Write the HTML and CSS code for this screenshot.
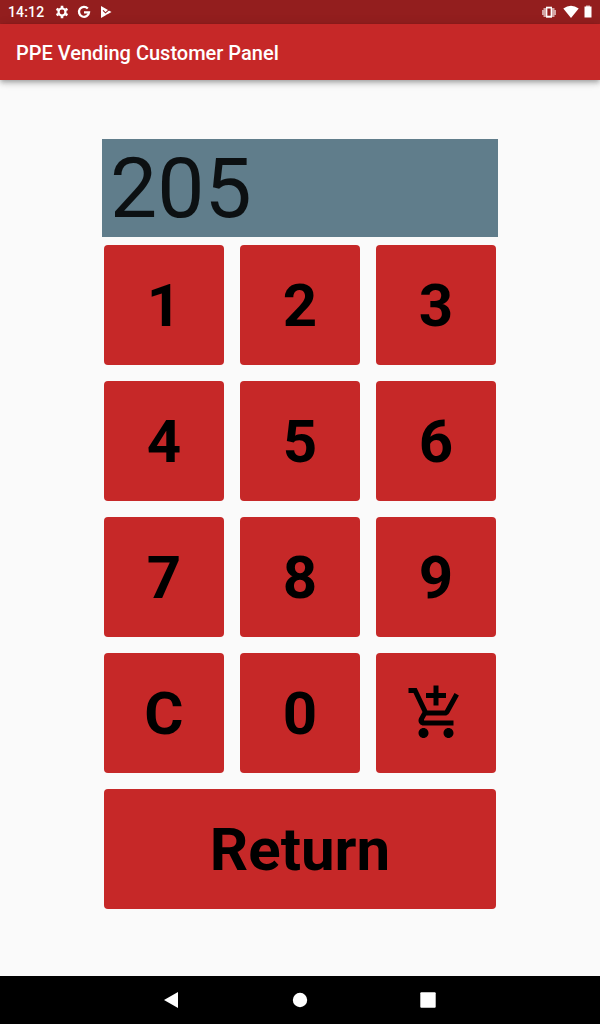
FILE: index.html
```html
<!DOCTYPE html>
<html lang="en">
<head>
<meta charset="utf-8">
<title>PPE Vending Customer Panel</title>
<link rel="stylesheet" href="styles.css">
</head>
<body>
<div class="screen">
  <div class="status">
    <span class="time">14:12</span>
    <svg class="gear" width="14" height="14" viewBox="0 0 14 14"><circle cx="7" cy="7" r="3.500" fill="none" stroke="#fff" stroke-width="2.200"/><path stroke="#fff" stroke-width="2.600" d="M7 .7v2.200M7 11.100v2.200M1.540 3.850l1.900 1.100M10.560 9.050l1.900 1.100M1.540 10.150l1.900-1.100M10.560 4.950l1.900-1.100"/></svg>
    <svg class="google" width="14" height="14" viewBox="0 0 14 14"><path fill="none" stroke="#fff" stroke-width="2.300" d="M10.800 3.500A5 5 0 1 0 12 7.300H7"/></svg>
    <svg class="play" width="14" height="14" viewBox="0 0 14 14"><path fill="#fff" d="M2 1l10.500 6L2 13z"/><path fill="none" stroke="#931e1e" stroke-width="1.100" d="M4 5.300l2.500 2.500L11 3.800"/><path fill="none" stroke="#931e1e" stroke-width=".7" opacity=".7" d="M5.500 13l3-4"/></svg>
    <span class="fill"></span>
    <svg class="vibrate" width="16" height="14" viewBox="0 0 16 14"><path fill="#fff" opacity=".6" d="M1 5h1.500V3H5V1.500h6V3h2.500v2H15v5h-1.500v2H11v1H5v-1H2.500v-2H1z"/><path fill="#931e1e" d="M6 3.500h4v7H6z"/><path fill="none" stroke="#fff" stroke-width="1.300" d="M5.700 2.700h4.600v9H5.700z"/></svg>
    <svg class="wifi" width="16" height="14" viewBox="0 0 16 14"><path fill="#fff" d="M.3 3.600Q8-2.200 15.700 3.600L8 13z"/></svg>
    <svg class="battery" width="8" height="13" viewBox="0 0 8 13"><path fill="#fff" opacity=".65" d="M2 .5h4V2H2z"/><path fill="#fff" d="M.5 1.500h7v11h-7z"/></svg>
  </div>
  <header class="appbar">PPE Vending Customer Panel</header>
  <main class="panel">
    <div class="display">205</div>
    <div class="keys">
      <button class="key">1</button><button class="key">2</button><button class="key">3</button>
      <button class="key">4</button><button class="key">5</button><button class="key">6</button>
      <button class="key">7</button><button class="key">8</button><button class="key">9</button>
      <button class="key">C</button><button class="key">0</button>
      <button class="key" aria-label="Add to cart"><svg class="cart" width="60" height="60" viewBox="0 0 24 24"><path d="M11 9h2V6h3V4h-3V1h-2v3H8v2h3v3zm-4 9c-1.100 0-1.990.9-1.990 2S5.900 22 7 22s2-.9 2-2-.9-2-2-2zm10 0c-1.100 0-1.990.9-1.990 2s.89 2 1.990 2 2-.9 2-2-.9-2-2-2zm-9.830-3.250.03-.12.9-1.630h7.450c.75 0 1.410-.41 1.750-1.030l3.860-7.010L19.420 4h-.01l-1.100 2-2.760 5H8.530l-.13-.27L6.160 6l-.95-2-.94-2H1v2h2l3.600 7.590-1.350 2.450c-.16.28-.25.610-.25.960 0 1.100.9 2 2 2h12v-2H7.420c-.13 0-.25-.11-.25-.25z"/></svg></button>
      <button class="key wide">Return</button>
    </div>
  </main>
  <nav class="nav">
    <svg width="16" height="18" viewBox="0 0 16 18"><path fill="#fff" d="M14 1v16L0 9z"/></svg>
    <svg width="16" height="16" viewBox="0 0 16 16"><circle cx="8" cy="8" r="7.200" fill="#fff"/></svg>
    <svg width="16" height="16" viewBox="0 0 16 16"><rect x=".3" y=".3" width="15.400" height="15.400" rx="1" fill="#fff"/></svg>
  </nav>
</div>
</body>
</html>
```
FILE: styles.css
```css
* { box-sizing: border-box; }
body { margin: 0; font-family: Roboto, sans-serif; }
.screen { width: 600px; height: 1024px; display: flex; flex-direction: column; background: #fafafa; }
.status { height: 24px; flex: none; background: #931e1e; display: flex; align-items: center; padding: 0 8px; color: #fff; }
.time { font-size: 14px; font-weight: 500; width: 47px; letter-spacing: .15px; }
.google { margin-left: 8px; }
.play { margin-left: 8px; }
.fill { flex: 1; }
.wifi { margin-left: 6px; }
.battery { margin-left: 5px; margin-bottom: 1px; }
.appbar { height: 56px; flex: none; background: #c62828; color: #fff; font-size: 20px; font-weight: 500; line-height: 58px; padding-left: 16px; box-shadow: 0 2px 4px -1px rgba(0,0,0,.2), 0 4px 5px rgba(0,0,0,.14), 0 1px 10px rgba(0,0,0,.12); }
.panel { flex: 1; padding: 59px 102px 0; }
.display { height: 98px; background: #607d8b; color: rgba(0,0,0,.87); font-size: 84px; line-height: 100px; padding-left: 8px; }
.keys { display: grid; grid-template-columns: repeat(3, 120px); grid-auto-rows: 120px; gap: 16px; padding: 8px 2px 0; }
.key { border: 0; padding: 0; border-radius: 4px; background: #c62828; color: #000; font: 700 60px Roboto, sans-serif; display: flex; align-items: center; justify-content: center; }
.wide { grid-column: 1 / -1; }
.nav { height: 48px; flex: none; background: #000; display: flex; align-items: center; justify-content: center; gap: 112px; }
```
